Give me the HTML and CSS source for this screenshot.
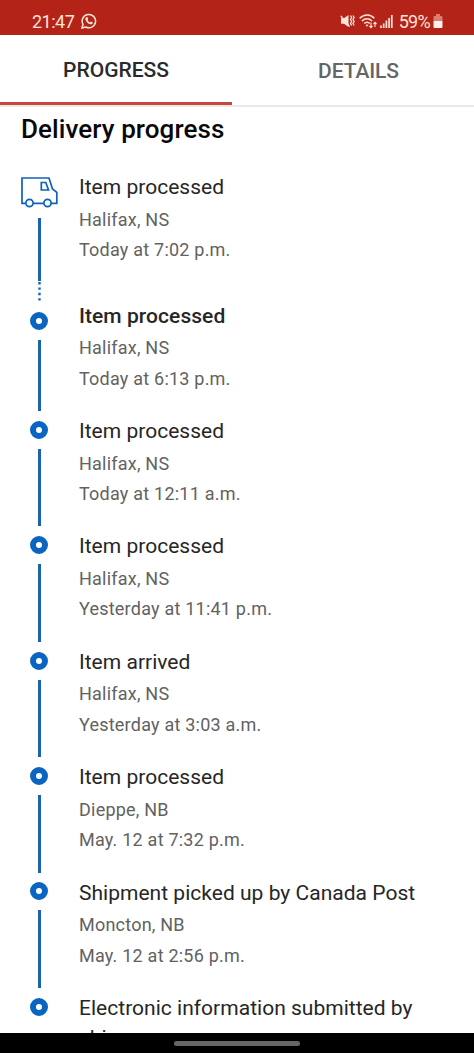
FILE: index.html
```html
<!DOCTYPE html>
<html lang="en">
<head>
<meta charset="utf-8">
<title>Delivery progress</title>
<link rel="stylesheet" href="styles.css">
</head>
<body>
<div class="screen">
  <header class="status">
    <span class="clock">21:47</span>
    <svg class="chat" width="16" height="16" viewBox="0 0 16 16"><path d="M1 15l1-3.7A6.7 6.7 0 1 1 4.7 14z" fill="none" stroke="#ffe4d8" stroke-width="1.5"/><path d="M5.3 4.2l1.1-.1.8 2-.7.9c.6 1.1 1.4 1.9 2.5 2.4l.9-.9 2 1c0 1.3-1.2 2-2.4 1.8C6.800 10.800 5 8.700 4.400 6.500c-.2-.9.2-1.800.9-2.300z" fill="#ffe4d8"/></svg>
    <span class="grow"></span>
    <svg class="mute" width="15" height="15" viewBox="0 0 15 15"><path d="M1 4.300h3L8.500 1v12L4 9.700H1z" fill="#ffe4d8"/><path d="M.8 1.800l8.700 10.700" stroke="#ffe4d8" stroke-width="1.300"/><path d="M10.500 1.500l1.100 2-1.100 2 1.100 2-1.100 2 1.100 2M13 1.500l1.100 2-1.100 2 1.100 2-1.100 2 1.100 2" fill="none" stroke="#ffe4d8" stroke-width="1.300"/></svg>
    <svg class="wifi" width="19" height="15" viewBox="0 0 19 15"><path d="M.7 4.300C5-.2 11.500-.2 15.300 4.300M3 7c3-3 7-3 10 0M5.300 9.500c1.600-1.700 3.900-1.700 5.400 0" fill="none" stroke="#ffe4d8" stroke-width="1.600"/><path d="M6.500 11L8 12.800 9.500 11Q8 9.800 6.500 11z" fill="#ffe4d8"/><path d="M12 8.500v5M10.500 12l1.500 1.600 1.500-1.600M16 13V8.500M14.500 10L16 8.400l1.500 1.600" fill="none" stroke="#ffe4d8" stroke-width="1.100"/></svg>
    <svg class="signal" width="13" height="13" viewBox="0 0 13 13"><path d="M1 10.500V13M3.700 8.500V13M6.400 5.500V13M9.100 3V13M11.800 0V13" stroke="#ffe4d8" stroke-width="1.700"/></svg>
    <span class="percent">59%</span>
    <svg class="battery" width="10" height="15" viewBox="0 0 10 15"><path d="M3 0h4v2h1.500Q9.500 2 9.500 3v4H.5V3q0-1 1-1H3z" fill="#dc7b72"/><path d="M.5 7h9v6q0 1-1 1h-7q-1 0-1-1z" fill="#fff0ea"/></svg>
  </header>
  <nav class="tabs">
    <div class="tab active">PROGRESS</div>
    <div class="tab">DETAILS</div>
  </nav>
  <main class="content">
    <h1>Delivery progress</h1>
    <ol class="timeline">
      <li class="event first">
        <div class="track">
          <svg class="van" width="38" height="32" viewBox="0 0 38 32"><g fill="none" stroke="#0d62bb" stroke-width="1.700"><path d="M5.500 27.300H2V2h27l3.500 11 4.300 3.300v11h-6.200M13 27.300h10.500"/><circle cx="9.500" cy="27" r="3.600"/><circle cx="27.500" cy="27" r="3.600"/><path d="M21.300 6.500h4.500l2.700 7.500h-7.200z"/></g></svg>
          <i class="line"></i>
          <svg class="dots" width="3" height="20" viewBox="0 0 3 20"><path d="M1.500 1v19" stroke="#0d62bb" stroke-width="2.400" stroke-dasharray="2.400 3"/></svg>
        </div>
        <div class="text"><h2>Item processed</h2><p>Halifax, NS</p><p>Today at 7:02 p.m.</p></div>
      </li>
      <li class="event current"><div class="track"><i class="ring"></i><i class="line"></i></div><div class="text"><h2>Item processed</h2><p>Halifax, NS</p><p>Today at 6:13 p.m.</p></div></li>
      <li class="event"><div class="track"><i class="ring"></i><i class="line"></i></div><div class="text"><h2>Item processed</h2><p>Halifax, NS</p><p>Today at 12:11 a.m.</p></div></li>
      <li class="event"><div class="track"><i class="ring"></i><i class="line"></i></div><div class="text"><h2>Item processed</h2><p>Halifax, NS</p><p>Yesterday at 11:41 p.m.</p></div></li>
      <li class="event"><div class="track"><i class="ring"></i><i class="line"></i></div><div class="text"><h2>Item arrived</h2><p>Halifax, NS</p><p>Yesterday at 3:03 a.m.</p></div></li>
      <li class="event"><div class="track"><i class="ring"></i><i class="line"></i></div><div class="text"><h2>Item processed</h2><p>Dieppe, NB</p><p>May. 12 at 7:32 p.m.</p></div></li>
      <li class="event"><div class="track"><i class="ring"></i><i class="line"></i></div><div class="text"><h2>Shipment picked up by Canada Post</h2><p>Moncton, NB</p><p>May. 12 at 2:56 p.m.</p></div></li>
      <li class="event last"><div class="track"><i class="ring"></i></div><div class="text"><h2>Electronic information submitted by<br>shipper</h2></div></li>
    </ol>
  </main>
  <footer class="navbar"><span class="handle"></span></footer>
</div>
</body>
</html>
```
FILE: styles.css
```css
* { box-sizing: border-box; margin: 0; padding: 0; }
body { background: #fff; font-family: Roboto, "Liberation Sans", sans-serif; }
.screen { width: 474px; height: 1053px; display: flex; flex-direction: column; overflow: hidden; }
.status { height: 34.500px; flex: none; background: #b42318; color: #ffe4d8; display: flex; align-items: center; padding: 8px 31px 0 32px; font-size: 18px; }
.status svg { flex: none; }
.clock { letter-spacing: -.5px; }
.chat { margin-left: 7px; }
.grow { flex: 1; }
.wifi { margin-left: 4px; }
.signal { margin-left: 2px; }
.percent { margin-left: 6px; letter-spacing: -.7px; }
.battery { margin-left: 3px; }
.tabs { flex: none; height: 72px; display: flex; border-bottom: 2px solid #e9e9e9; }
.tab { width: 232px; height: 72px; display: flex; align-items: center; justify-content: center; font-size: 21px; font-weight: 500; color: #666; }
.tab + .tab { width: 242px; padding-left: 11px; letter-spacing: -.1px; }
.tab.active { color: #2a2a2a; border-bottom: 3px solid #c8473c; height: 70.500px; padding-top: 4px; }
.content { flex: 1; min-height: 0; overflow: hidden; }
h1 { font-size: 26px; line-height: 36px; height: 63.400px; padding: 4px 0 0 21px; font-weight: 500; color: #080808; letter-spacing: .08px; }
.timeline { list-style: none; }
.event { display: flex; height: 115.400px; }
.event.first { height: 128.700px; }
.track { width: 79px; flex: none; display: flex; flex-direction: column; align-items: flex-start; padding-top: 6.900px; }
.current .track { padding-top: 13.600px; }
.first .track { padding-top: 6.600px; }
.van { margin-left: 20px; flex: none; }
.ring { flex: none; width: 18px; height: 18px; border: 6px solid #0a64c2; border-radius: 50%; margin-left: 30.400px; }
.line { flex: none; width: 3px; height: 77.500px; margin: 10px 0 0 38px; background: #1964ad; }
.current .line { height: 70.500px; }
.first .line { height: 62.500px; }
.dots { margin-left: 38px; flex: none; }
h2 { font-size: 21px; line-height: 34.700px; font-weight: 400; color: #262626; white-space: nowrap; letter-spacing: .02px; }
.current h2 { font-weight: 500; letter-spacing: .06px; }
.last h2 { line-height: 30px; padding-top: 2px; }
p { font-size: 18px; line-height: 30.400px; color: #626262; letter-spacing: .22px; white-space: nowrap; }
.navbar { flex: none; height: 20px; background: #000; display: flex; justify-content: center; padding-top: 8px; }
.handle { width: 126px; height: 5px; border-radius: 3px; background: #666; }
```
